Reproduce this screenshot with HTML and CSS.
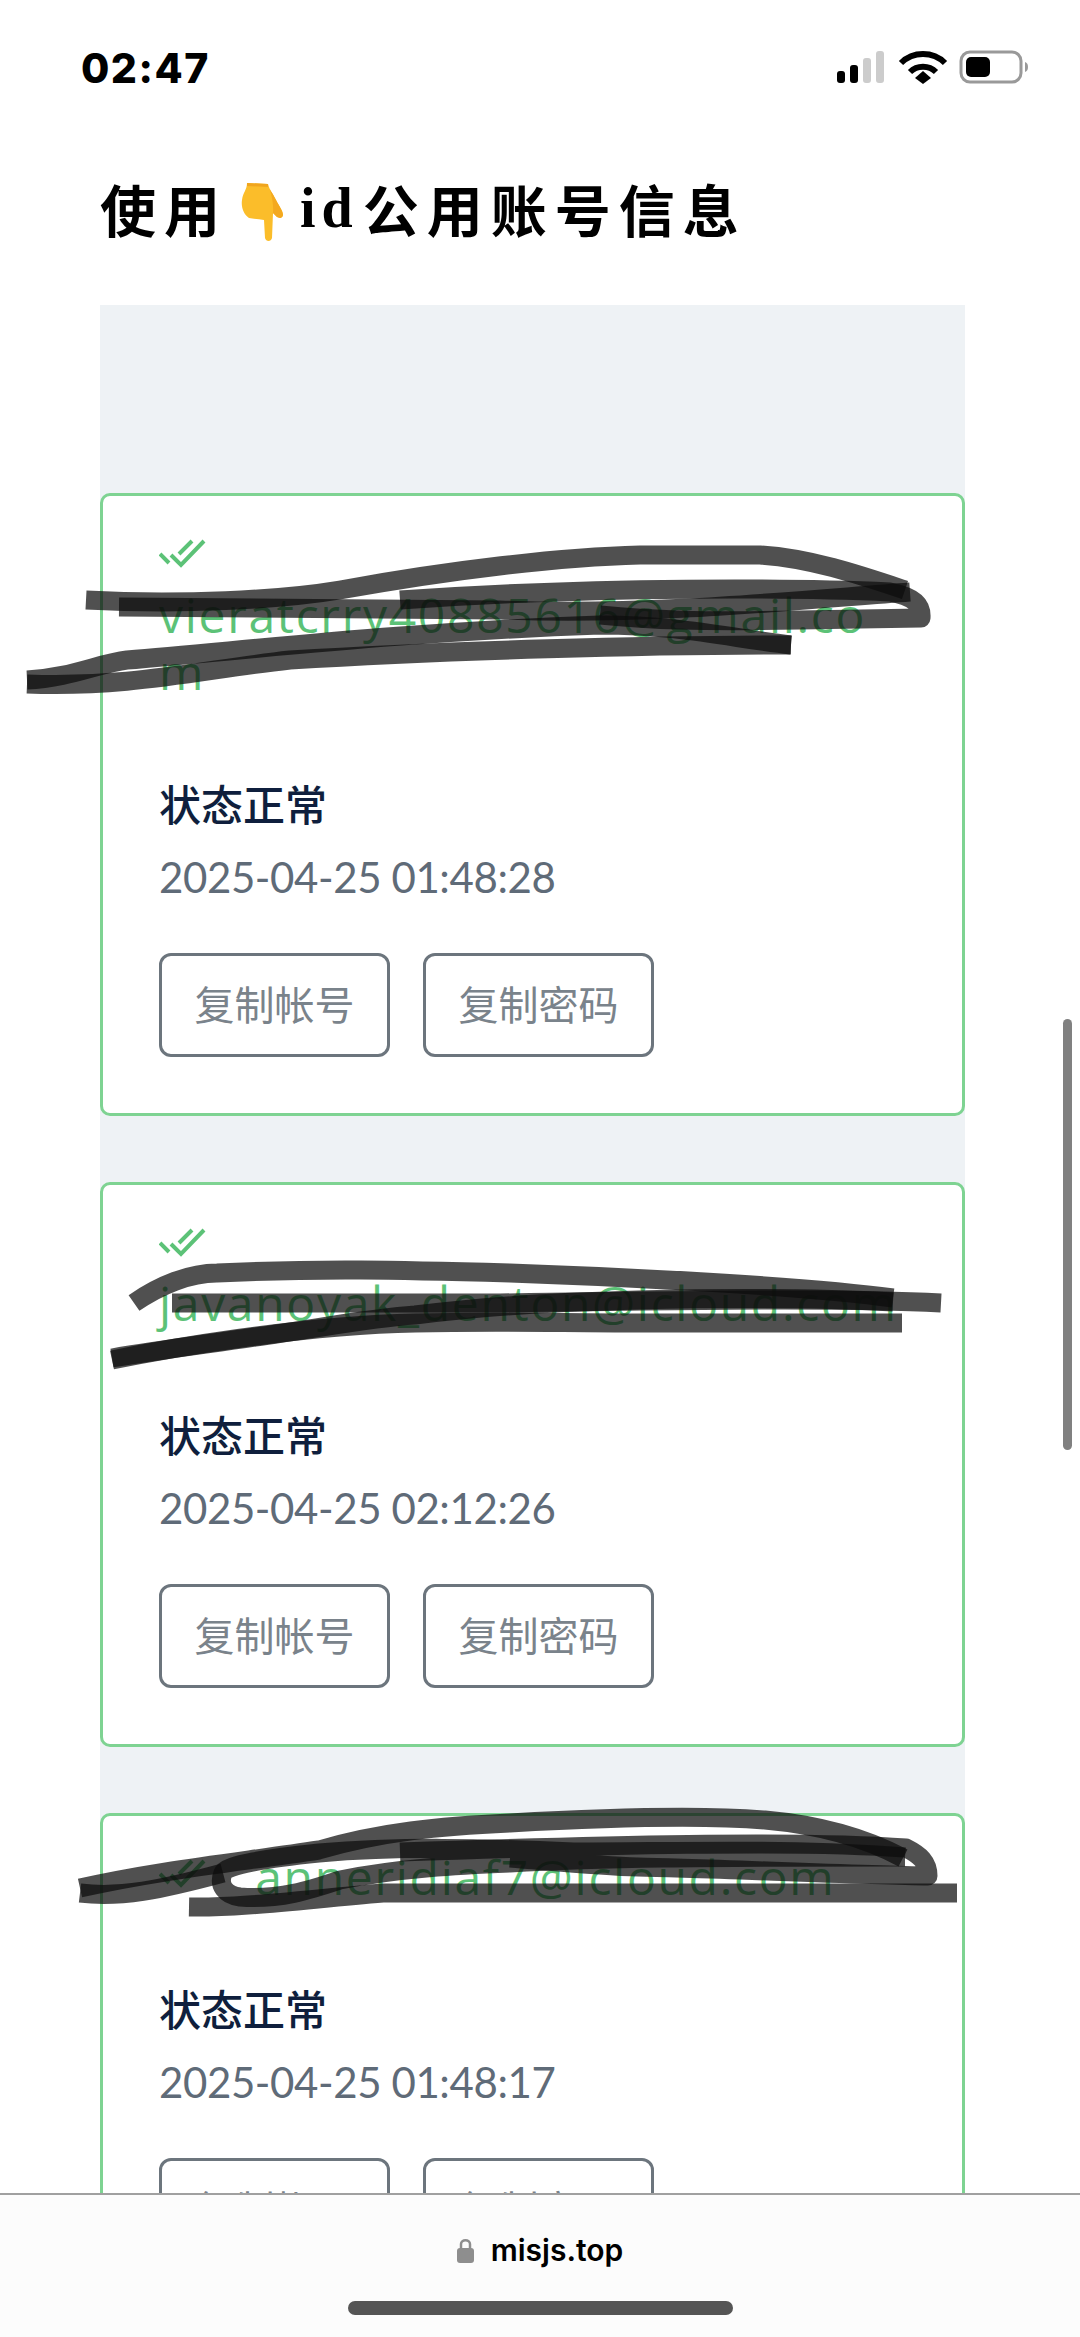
FILE: index.html
```html
<!DOCTYPE html>
<html lang="zh">
<head>
<meta charset="utf-8">
<title>misjs.top</title>
<link rel="stylesheet" href="styles.css">
</head>
<body>
<div class="screen">
  <header class="status">
    <span class="time">02:47</span>
    <svg class="status-icons" width="196" height="36" viewBox="0 0 196 36">
      <rect x="0" y="21" width="8" height="12" rx="3" fill="#000"/>
      <rect x="13" y="15" width="8" height="18" rx="3" fill="#000"/>
      <rect x="26" y="8" width="8" height="25" rx="3" fill="#ccc"/>
      <rect x="39" y="1" width="8" height="32" rx="3" fill="#ccc"/>
      <path d="M64 13 C76 1 96 1 108 13" fill="none" stroke="#000" stroke-width="6"/>
      <path d="M73 22 C80 15 92 15 99 22" fill="none" stroke="#000" stroke-width="6"/>
      <path d="M78 28 L86 21 L94 28 L86 34 Z" fill="#000"/>
      <rect x="124" y="2" width="60" height="30" rx="9" fill="none" stroke="#999" stroke-width="3"/>
      <rect x="129" y="7" width="24" height="20" rx="5" fill="#000"/>
      <path d="M188 12 C192 13 192 21 188 22 Z" fill="#999"/>
    </svg>
  </header>

  <h1 class="title">使用<svg class="emoji" width="50" height="62" viewBox="0 0 50 62">
      <path d="M8 3 L29 4 C30 9 33 12 37 20 C40 26 44 31 44 35 C43 39 40 38 38 37 L34 33 L33 58 C32 62 27 62 26 58 L25 40 C20 39 14 39 10 38 C4 34 2 26 3 20 C4 12 8 10 8 3 Z" fill="#fbbd2a"/>
      <path d="M29 4 C30 9 33 12 37 20 C40 26 44 31 44 35 C43 39 40 38 38 37 L34 33 C35 24 32 12 29 4 Z" fill="#f4a91f"/>
      <path d="M8 3 L29 4 L29 7 L8 6 Z" fill="#f0a51e"/>
    </svg><span class="latin">id</span>公用账号信息</h1>

  <main class="panel">
    <article class="card">
      <p class="account"><svg class="check" width="48" height="32" viewBox="0 0 48 32"><path d="M1 16 L10 25 M12 17 L22 27 L45 3 M20 16 L33 3" fill="none" stroke="#5cc277" stroke-width="4"/></svg> vieratcrry40885616@gmail.com</p>
      <p class="state">状态正常</p>
      <p class="date">2025-04-25 01:48:28</p>
      <div class="actions"><button class="btn">复制帐号</button><button class="btn">复制密码</button></div>
    </article>
    <article class="card">
      <p class="account"><svg class="check" width="48" height="32" viewBox="0 0 48 32"><path d="M1 16 L10 25 M12 17 L22 27 L45 3 M20 16 L33 3" fill="none" stroke="#5cc277" stroke-width="4"/></svg> javanoyak_denton@icloud.com</p>
      <p class="state">状态正常</p>
      <p class="date">2025-04-25 02:12:26</p>
      <div class="actions"><button class="btn">复制帐号</button><button class="btn">复制密码</button></div>
    </article>
    <article class="card">
      <p class="account"><svg class="check" width="48" height="32" viewBox="0 0 48 32"><path d="M1 16 L10 25 M12 17 L22 27 L45 3 M20 16 L33 3" fill="none" stroke="#5cc277" stroke-width="4"/></svg> anneridiaf7@icloud.com</p>
      <p class="state">状态正常</p>
      <p class="date">2025-04-25 01:48:17</p>
      <div class="actions"><button class="btn">复制帐号</button><button class="btn">复制密码</button></div>
    </article>
  </main>

  <svg class="scribbles" width="1080" height="2337" viewBox="0 0 1080 2337">
    <g class="ink">
      <path d="M86 600 C180 605 280 600 340 590 C450 570 560 557 640 555 L760 555 C810 558 860 575 905 590"/>
      <path d="M119 607 L500 610 C650 616 800 600 910 592"/>
      <path d="M400 600 C600 586 800 588 890 592 C915 597 922 605 921 618 L800 620 C700 622 650 620 600 615"/>
      <path d="M27 680 C70 678 100 663 127 660 C250 650 400 632 600 625 C680 625 730 638 791 645"/>
      <path d="M791 645 C650 645 450 650 290 660 C200 670 130 688 27 684"/>
      <path d="M134 1303 C160 1285 190 1273 217 1273 C320 1268 400 1270 510 1273 C600 1276 800 1285 893 1298"/>
      <path d="M172 1303 L500 1303 C700 1300 850 1298 941 1303"/>
      <path d="M112 1358 C160 1350 200 1345 255 1337 C320 1328 370 1318 415 1315 C500 1305 560 1302 638 1300 C720 1298 820 1298 893 1302"/>
      <path d="M112 1360 C160 1350 300 1325 415 1323 C500 1321 560 1323 638 1323 L902 1323"/>
      <path d="M80 1888 C160 1870 240 1862 319 1850 C380 1832 440 1826 510 1823 C600 1818 700 1815 765 1820 C810 1824 860 1835 903 1858"/>
      <path d="M905 1857 C800 1848 680 1852 574 1852 C480 1848 400 1846 319 1853 C270 1858 225 1865 223 1873 C218 1885 225 1895 240 1897 C280 1900 310 1890 340 1880 C400 1868 460 1865 510 1863 C600 1858 700 1857 905 1857"/>
      <path d="M400 1852 C600 1845 800 1840 906 1848 C920 1855 928 1862 928 1876 C860 1875 700 1868 638 1867 C600 1866 560 1862 510 1858"/>
      <path d="M189 1907 C240 1908 300 1900 383 1893 L957 1893"/>
      <path d="M80 1893 C120 1898 160 1890 223 1873"/>
    </g>
  </svg>

  <div class="scrollbar"></div>

  <footer class="bar">
    <div class="url">
      <svg class="lock" width="17" height="25" viewBox="0 0 17 25"><path d="M4 11 V6 C4 1 13 1 13 6 V11" fill="none" stroke="#8e8e8e" stroke-width="2.5"/><rect x="0" y="10" width="17" height="15" rx="3" fill="#8e8e8e"/></svg>
      <span class="host">misjs.top</span>
    </div>
    <div class="home"></div>
  </footer>
</div>
</body>
</html>
```
FILE: styles.css
```css
* { box-sizing: border-box; }
html, body { margin: 0; padding: 0; background: #fff; }
p, h1 { margin: 0; }
.screen {
  position: relative;
  width: 1080px;
  height: 2337px;
  overflow: hidden;
  background: #fff;
  font-family: Lato, "Noto Sans CJK SC", sans-serif;
}
.status {
  display: flex;
  justify-content: space-between;
  align-items: center;
  height: 136px;
  padding: 0 47px 0 81px;
}
.time {
  font-family: Inter, sans-serif;
  font-weight: 800;
  font-size: 41px;
  letter-spacing: 1.5px;
  color: #000;
}
.status-icons { display: block; }
.title {
  display: flex;
  align-items: center;
  height: 169px;
  padding: 0 0 26px 100px;
  font-family: "Noto Sans CJK SC", sans-serif;
  font-weight: 700;
  font-size: 56px;
  letter-spacing: 8px;
  color: #000;
}
.emoji { margin: 6px 11px 0 11px; }
.latin { font-family: "Liberation Serif", serif; letter-spacing: 6px; margin-right: 4px; }
.panel {
  display: flex;
  flex-direction: column;
  gap: 66px;
  width: 865px;
  margin-left: 100px;
  padding-top: 188px;
  background: #eef2f5;
}
.card {
  padding: 32px 56px 56px;
  background: #fff;
  border: 3px solid #7ed392;
  border-radius: 10px;
}
.account {
  font-family: "Open Sans", sans-serif;
  font-size: 48px;
  letter-spacing: 1.7px;
  line-height: 57.6px;
  color: #5cc277;
  overflow-wrap: break-word;
}
.check { vertical-align: 5px; margin-right: 34px; }
.state {
  margin-top: 75px;
  font-size: 42px;
  line-height: 58px;
  font-weight: 500;
  color: #0f1f3d;
}
.date {
  margin-top: 14px;
  font-size: 42px;
  letter-spacing: -0.4px;
  line-height: 58px;
  color: #5f6b78;
}
.actions { display: flex; gap: 33px; margin-top: 47px; }
.btn {
  width: 231px;
  height: 104px;
  padding: 0 0 4px;
  background: transparent;
  border: 3px solid #6c757d;
  border-radius: 12px;
  font-family: Lato, "Noto Sans CJK SC", sans-serif;
  font-size: 40px;
  color: #7a838b;
}
.scribbles { position: absolute; left: 0; top: 0; pointer-events: none; }
.ink path { fill: none; stroke: #0d0d0d; stroke-width: 19; stroke-opacity: .72; stroke-linejoin: round; }
.scrollbar {
  position: absolute;
  left: 1063px;
  top: 1019px;
  width: 9px;
  height: 431px;
  border-radius: 5px;
  background: #808080;
}
.bar {
  position: absolute;
  left: 0;
  right: 0;
  bottom: 0;
  height: 144px;
  background: #fcfcfc;
  border-top: 2px solid #a0a0a0;
}
.url {
  display: flex;
  justify-content: center;
  align-items: center;
  gap: 17px;
  margin-top: 40px;
  height: 30px;
}
.host {
  font-family: Inter, sans-serif;
  font-weight: 600;
  font-size: 30px;
  color: #000;
}
.home {
  width: 385px;
  height: 14px;
  margin: 36px auto 0;
  border-radius: 7px;
  background: #555;
}
```
